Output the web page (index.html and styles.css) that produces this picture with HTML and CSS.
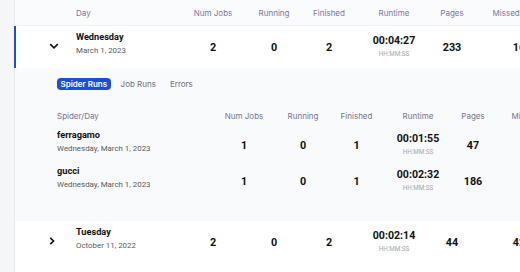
FILE: index.html
```html
<!DOCTYPE html>
<html>
<head>
<meta charset="utf-8">
<link rel="stylesheet" href="styles.css">
</head>
<body>
<div class="card">
  <div class="grid head">
    <div></div>
    <div class="left">Day</div>
    <div>Num Jobs</div>
    <div>Running</div>
    <div>Finished</div>
    <div>Runtime</div>
    <div>Pages</div>
    <div>Missed Pages</div>
  </div>

  <div class="grid row expanded">
    <div class="chev"><svg width="10" height="6" viewBox="0 0 10 6"><path d="M1.2 1.2 L5 4.8 L8.8 1.2" fill="none" stroke="#111" stroke-width="1.6"/></svg></div>
    <div class="day"><div class="name">Wednesday</div><div class="date">March 1, 2023</div></div>
    <div class="val">2</div>
    <div class="val">0</div>
    <div class="val">2</div>
    <div class="rt"><div class="time">00:04:27</div><div class="fmt">HH:MM:SS</div></div>
    <div class="val">233</div>
    <div class="val">16</div>
  </div>

  <div class="nested">
    <div class="tabs">
      <span class="tab active">Spider Runs</span>
      <span class="tab">Job Runs</span>
      <span class="tab">Errors</span>
    </div>
    <div class="sgrid shead">
      <div class="left">Spider/Day</div>
      <div>Num Jobs</div>
      <div>Running</div>
      <div>Finished</div>
      <div>Runtime</div>
      <div>Pages</div>
      <div>Missed Pages</div>
    </div>
    <div class="sgrid srow">
      <div class="day"><div class="name">ferragamo</div><div class="date">Wednesday, March 1, 2023</div></div>
      <div class="val">1</div>
      <div class="val">0</div>
      <div class="val">1</div>
      <div class="rt"><div class="time">00:01:55</div><div class="fmt">HH:MM:SS</div></div>
      <div class="val">47</div>
      <div class="val">0</div>
    </div>
    <div class="sgrid srow">
      <div class="day"><div class="name">gucci</div><div class="date">Wednesday, March 1, 2023</div></div>
      <div class="val">1</div>
      <div class="val">0</div>
      <div class="val">1</div>
      <div class="rt"><div class="time">00:02:32</div><div class="fmt">HH:MM:SS</div></div>
      <div class="val">186</div>
      <div class="val">16</div>
    </div>
  </div>

  <div class="grid row">
    <div class="chev"><svg width="6" height="8" viewBox="0 0 6 8"><path d="M1.2 0.8 L4.6 4 L1.2 7.2" fill="none" stroke="#111" stroke-width="1.6"/></svg></div>
    <div class="day"><div class="name">Tuesday</div><div class="date">October 11, 2022</div></div>
    <div class="val">2</div>
    <div class="val">0</div>
    <div class="val">2</div>
    <div class="rt"><div class="time">00:02:14</div><div class="fmt">HH:MM:SS</div></div>
    <div class="val">44</div>
    <div class="val">42</div>
  </div>
</div>
</body>
</html>
```

FILE: styles.css
```css
html, body {
  margin: 0;
  padding: 0;
  background: #f5f6f8;
  overflow: hidden;
  width: 520px;
  height: 272px;
}
body {
  font-family: Roboto, "Liberation Sans", sans-serif;
  color: #111;
}
.card {
  margin-left: 14px;
  border-left: 1px solid #e6e7ec;
  background: #fff;
  width: 620px;
  height: 272px;
}
.grid {
  display: grid;
  grid-template-columns: 61px 107px 60px 62px 48px 82px 34px 100px;
}
.sgrid {
  display: grid;
  grid-template-columns: 199px 60px 58px 49px 74px 36px 94px;
}
.head {
  height: 26px;
  box-sizing: border-box;
  background: #fafbfc;
  border-bottom: 1px solid #f0f1f5;
  font-family: Inter, Roboto, sans-serif;
  font-size: 8px;
  line-height: 26px;
  color: #7877a3;
  text-align: center;
  white-space: nowrap;
}
.head .left, .shead .left {
  text-align: left;
}
.row {
  height: 42px;
  background: #fff;
  align-items: start;
}
.row > div {
  text-align: center;
}
.expanded {
  box-shadow: -1px 0 0 #1d4ed8, inset 1px 0 0 #1d4ed8;
}
.chev {
  padding-top: 16px;
  padding-left: 34px;
  height: 8px;
  display: flex;
  align-items: center;
}
.row .chev svg {
  display: block;
}
.day {
  padding-top: 5px;
  text-align: left !important;
  white-space: nowrap;
}
.name {
  font-size: 9.2px;
  font-weight: 700;
  line-height: 12px;
}
.date {
  font-size: 7.9px;
  line-height: 15px;
  color: #5a5a5a;
}
.val {
  padding-top: 15px;
  font-size: 10.8px;
  font-weight: 700;
  line-height: 13px;
}
.rt {
  padding-top: 8px;
}
.time {
  font-size: 10.6px;
  font-weight: 700;
  line-height: 13px;
}
.fmt {
  font-size: 6.3px;
  line-height: 14px;
  color: #a6a6a6;
}
.nested {
  background: #f9fafc;
  padding: 10px 0 25px 0;
}
.tabs {
  display: flex;
  gap: 6px;
  padding-left: 42px;
  font-family: Inter, Roboto, sans-serif;
  font-size: 8px;
  height: 12px;
  align-items: center;
}
.tab {
  padding: 0 4px;
  line-height: 12px;
  color: #6a6c86;
}
.tab.active {
  background: #1a4fd8;
  color: #fff;
  font-weight: 600;
  border-radius: 4px;
  padding: 0 3.5px;
}
.shead {
  margin-top: 14px;
  height: 20px;
  font-family: Inter, Roboto, sans-serif;
  font-size: 8px;
  line-height: 12px;
  padding-top: 6px;
  box-sizing: border-box;
  color: #75758f;
  text-align: center;
  white-space: nowrap;
}
.shead .left {
  padding-left: 42px;
}
.srow {
  height: 36px;
  align-items: start;
}
.srow > div {
  text-align: center;
}
.srow .day {
  padding-left: 42px;
}
```
